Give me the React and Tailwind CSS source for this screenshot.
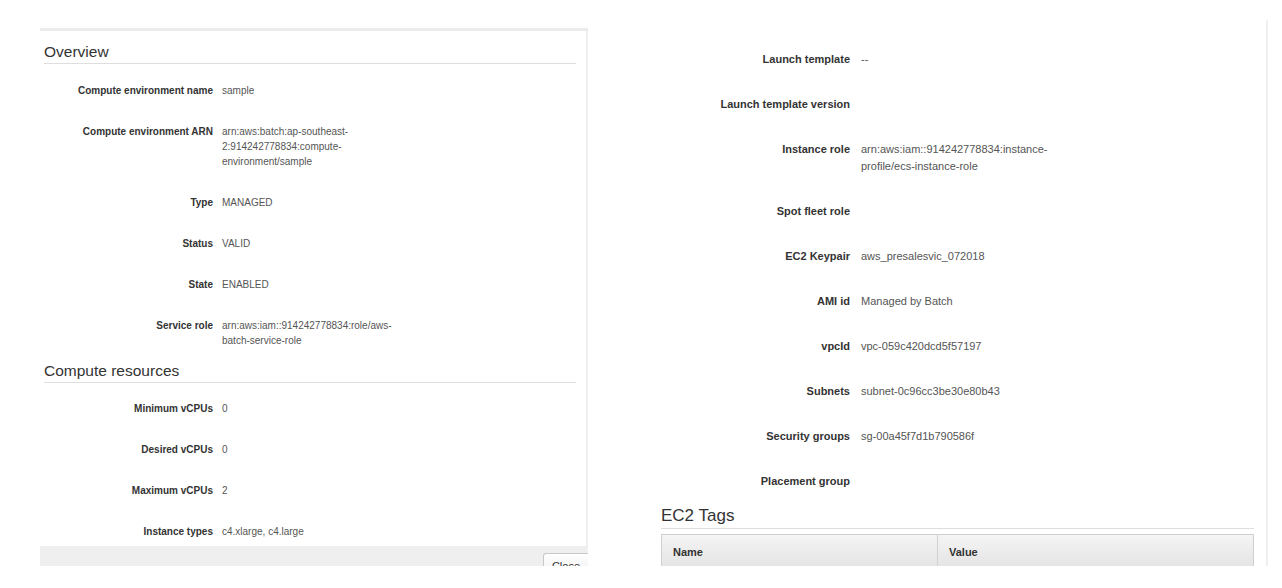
const overview = [
  { label: 'Compute environment name', value: ['sample'] },
  {
    label: 'Compute environment ARN',
    value: ['arn:aws:batch:ap-southeast-', '2:914242778834:compute-', 'environment/sample'],
  },
  { label: 'Type', value: ['MANAGED'] },
  { label: 'Status', value: ['VALID'] },
  { label: 'State', value: ['ENABLED'] },
  { label: 'Service role', value: ['arn:aws:iam::914242778834:role/aws-', 'batch-service-role'] },
];

const resources = [
  { label: 'Minimum vCPUs', value: ['0'] },
  { label: 'Desired vCPUs', value: ['0'] },
  { label: 'Maximum vCPUs', value: ['2'] },
  { label: 'Instance types', value: ['c4.xlarge, c4.large'] },
];

const launch = [
  { label: 'Launch template', value: ['--'] },
  { label: 'Launch template version', value: [] },
  { label: 'Instance role', value: ['arn:aws:iam::914242778834:instance-', 'profile/ecs-instance-role'] },
  { label: 'Spot fleet role', value: [] },
  { label: 'EC2 Keypair', value: ['aws_presalesvic_072018'] },
  { label: 'AMI id', value: ['Managed by Batch'] },
  { label: 'vpcId', value: ['vpc-059c420dcd5f57197'] },
  { label: 'Subnets', value: ['subnet-0c96cc3be30e80b43'] },
  { label: 'Security groups', value: ['sg-00a45f7d1b790586f'] },
  { label: 'Placement group', value: [] },
];

function Row({ row, labelWidth, gap }) {
  return (
    <div className="flex">
      <div className={`${labelWidth} shrink-0 text-right font-bold text-[#333]`}>{row.label}</div>
      <div className={`${gap} text-[#555]`}>
        {row.value.map((line) => (
          <div key={line}>{line}</div>
        ))}
      </div>
    </div>
  );
}

function Heading({ children, className }) {
  return (
    <div className={`border-b border-[#dedede] text-[#333] ${className}`}>{children}</div>
  );
}

export default function App() {
  const font = { fontFamily: '"Liberation Sans", Arial, Helvetica, sans-serif' };

  return (
    <div className="flex h-[588px] w-[1282px] items-start overflow-hidden bg-white" style={font}>
      {/* left modal */}
      <div className="ml-[40px] mt-[28px] flex h-[538px] w-[548px] flex-col overflow-hidden border-t-[3px] border-[#ebebeb]">
        <div className="flex-1 border-r-2 border-[#efefef] pl-[4px] pr-[10px] pt-[10px]">
          <Heading className="h-[23px] text-[15.5px] leading-[22px]">Overview</Heading>
          <div className="mt-[19px] flex flex-col gap-[26px] text-[10px] leading-[15px]">
            {overview.map((row) => (
              <Row key={row.label} row={row} labelWidth="w-[169px]" gap="pl-[9px]" />
            ))}
          </div>
          <Heading className="mt-[12px] h-[23px] text-[15.5px] leading-[22px]">Compute resources</Heading>
          <div className="mt-[18px] flex flex-col gap-[26px] text-[10px] leading-[15px]">
            {resources.map((row) => (
              <Row key={row.label} row={row} labelWidth="w-[169px]" gap="pl-[9px]" />
            ))}
          </div>
        </div>
        <div className="flex h-[20px] shrink-0 justify-end bg-[#efefef] pt-[7px]">
          <button className="h-[26px] rounded-tl-[3px] border border-r-0 border-[#c9c9c9] bg-linear-to-b from-white to-[#eeeeee] px-[8px] text-[11px] leading-[24px] text-[#333]">
            Close
          </button>
        </div>
      </div>

      {/* right panel */}
      <div className="ml-[62px] mt-[20px] h-[546px] w-[618px] overflow-hidden border-r-2 border-[#efefef] pl-[11px] pr-[12px] pt-[31px]">
        <div className="flex flex-col gap-[28px] text-[11px] leading-[17px]">
          {launch.map((row) => (
            <Row key={row.label} row={row} labelWidth="w-[189px]" gap="pl-[11px]" />
          ))}
        </div>
        <Heading className="mt-[14px] h-[25px] text-[17px] leading-[24px]">EC2 Tags</Heading>
        <div className="mt-[5px] flex h-[36px] border border-[#cfcfcf] bg-linear-to-b from-[#f4f4f4] to-[#e3e3e3] text-[11px] font-bold text-[#333]">
          <div className="flex w-[276px] items-center border-r border-[#d2d2d2] pl-[11px]">Name</div>
          <div className="flex flex-1 items-center pl-[11px]">Value</div>
        </div>
      </div>
    </div>
  );
}
